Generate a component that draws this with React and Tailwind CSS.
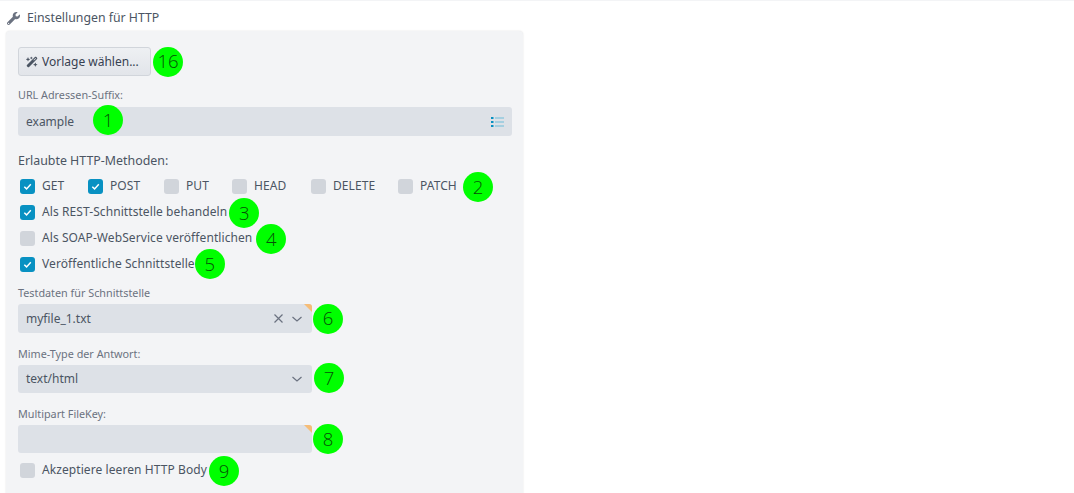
import { FaWrench } from "react-icons/fa";
import { FaWandMagicSparkles } from "react-icons/fa6";

function Badge({ children, className = "" }) {
  return (
    <span className={`flex h-[30px] w-[30px] shrink-0 items-center justify-center rounded-full bg-[#00ff00] font-['Open_Sans',sans-serif] text-[18.5px] font-light leading-none text-[#064f06] ${className}`}>
      {children}
    </span>
  );
}

function Box({ checked }) {
  return (
    <span className={`flex h-[15px] w-[15px] shrink-0 items-center justify-center rounded-[3px] ${checked ? "bg-[#0891c2]" : "bg-[#d1d5db]"}`}>
      {checked && (
        <svg width="11" height="11" viewBox="0 0 12 12" fill="none" stroke="white" strokeWidth="1.6">
          <path d="M2.5 6.2L5 8.6L9.6 3.6" />
        </svg>
      )}
    </span>
  );
}

function Check({ label, checked, className = "" }) {
  return (
    <label className={`flex h-[26px] items-center ${className}`}>
      <Box checked={checked} />
      <span className="ml-[7px] whitespace-nowrap tracking-[0.08px]">{label}</span>
    </label>
  );
}

function Corner() {
  return <span className="absolute right-0 top-0 h-[8px] w-[8px] rounded-tr-[3px] bg-[#f6bd78] [clip-path:polygon(0_0,100%_0,100%_100%)]" />;
}

function Chevron() {
  return (
    <svg width="12" height="12" viewBox="0 0 12 12" fill="none" stroke="#6b7280" strokeWidth="1.2">
      <path d="M1.5 4L6 8L10.5 4" />
    </svg>
  );
}

const labelClass = "text-[10.8px] leading-[14px] text-[#6b7280]";
const rowBadge = "-mt-px -mb-[3px]";

export default function App() {
  return (
    <div className="h-[493px] overflow-hidden bg-white font-['Noto_Sans',sans-serif] text-[12px] text-[#4b5563]">
      <div className="h-px bg-[#f3f4f6]" />
      <div className="flex h-[30px] items-center gap-[7px] pl-[7px] pt-[4px]">
        <FaWrench className="h-[13px] w-[13px] text-[#6b7280]" />
        <span className="text-[12.3px]">Einstellungen für HTTP</span>
      </div>
      <div className="ml-[6px] h-[480px] w-[517px] rounded-[4px] bg-[#f3f4f6] px-[12px] pt-[16px] shadow-[0_0_2px_rgba(0,0,0,0.12)]">
        <div className="flex items-center gap-[2px]">
          <button className="flex h-[29px] w-[133px] items-center gap-[4px] rounded-[3px] border border-[#d1d5db] bg-gradient-to-b from-[#eef0f3] to-[#e2e5ea] pl-[7px] text-[#374151]">
            <FaWandMagicSparkles className="h-[12px] w-[12px] text-[#4b5563]" />
            Vorlage wählen...
          </button>
          <Badge className="-my-[2px]">16</Badge>
        </div>

        <div className={`mt-[12px] ${labelClass}`}>URL Adressen-Suffix:</div>
        <div className="relative mt-[5px] flex h-[29px] w-[494px] items-center justify-between rounded-[3px] bg-[#dde1e7] pl-[8px] pr-[7px]">
          <span>example</span>
          <svg width="14" height="12" viewBox="0 0 14 12">
            <rect x="0" y="1" width="2.5" height="2" fill="#0891c2" />
            <rect x="0" y="5" width="2.5" height="2" fill="#0891c2" />
            <rect x="0" y="9" width="2.5" height="2" fill="#0891c2" />
            <rect x="4" y="1" width="9" height="2" fill="#a5cfe0" />
            <rect x="4" y="5" width="9" height="2" fill="#a5cfe0" />
            <rect x="4" y="9" width="9" height="2" fill="#a5cfe0" />
          </svg>
          <Badge className="absolute left-[75px] top-[-2px]">1</Badge>
        </div>

        <div className="mt-[17px] text-[12.4px] leading-[15px]">Erlaubte HTTP-Methoden:</div>
        <div className="mt-[5px] flex items-center pl-[2px]">
          <Check label="GET" checked className="w-[68px]" />
          <Check label="POST" checked className="w-[76px]" />
          <Check label="PUT" className="w-[68px]" />
          <Check label="HEAD" className="w-[79px]" />
          <Check label="DELETE" className="w-[87px]" />
          <Check label="PATCH" className="w-[65px]" />
          <Badge className={rowBadge}>2</Badge>
        </div>
        <div className="flex items-center gap-[2px] pl-[2px]">
          <Check label="Als REST-Schnittstelle behandeln" checked />
          <Badge className={rowBadge}>3</Badge>
        </div>
        <div className="flex items-center gap-[4px] pl-[2px]">
          <Check label="Als SOAP-WebService veröffentlichen" />
          <Badge className={rowBadge}>4</Badge>
        </div>
        <div className="flex items-center gap-0 pl-[2px]">
          <Check label="Veröffentliche Schnittstelle" checked />
          <Badge className="-my-[2px]">5</Badge>
        </div>

        <div className={`mt-[9px] ${labelClass}`}>Testdaten für Schnittstelle</div>
        <div className="mt-[4px] flex items-center gap-[1px]">
          <div className="relative flex h-[29px] w-[294px] items-center rounded-[3px] bg-[#dde1e7] pl-[8px] pr-[9px]">
            <span className="flex-1">myfile_1.txt</span>
            <svg className="mr-[8px]" width="9" height="9" viewBox="0 0 9 9" stroke="#6b7280" strokeWidth="1.2">
              <path d="M0.5 0.5L8.5 8.5M8.5 0.5L0.5 8.5" />
            </svg>
            <Chevron />
            <Corner />
          </div>
          <Badge className="-my-[2px]">6</Badge>
        </div>

        <div className={`mt-[14px] ${labelClass}`}>Mime-Type der Antwort:</div>
        <div className="mt-[4px] flex items-center gap-[2px]">
          <div className="flex h-[28px] w-[294px] items-center justify-between rounded-[3px] bg-[#dde1e7] pl-[8px] pr-[9px]">
            <span>text/html</span>
            <Chevron />
          </div>
          <Badge className="-mt-[3px] -mb-px">7</Badge>
        </div>

        <div className={`mt-[14px] ${labelClass}`}>Multipart FileKey:</div>
        <div className="mt-[4px] flex items-center gap-px">
          <div className="relative h-[28px] w-[294px] rounded-[3px] bg-[#dde1e7]">
            <Corner />
          </div>
          <Badge className="-my-px">8</Badge>
        </div>
        <div className="mt-[4px] flex items-center gap-[2px] pl-[2px]">
          <Check label="Akzeptiere leeren HTTP Body" />
          <Badge className={rowBadge}>9</Badge>
        </div>
      </div>
    </div>
  );
}
